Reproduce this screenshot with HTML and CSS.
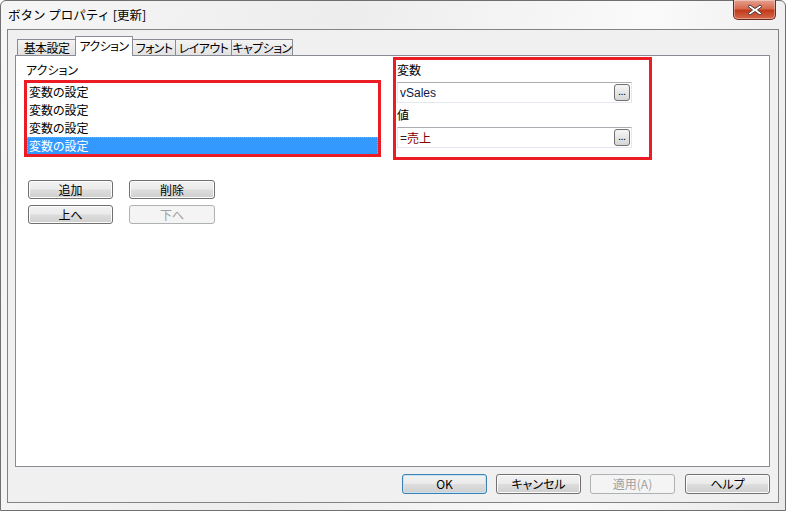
FILE: index.html
```html
<!DOCTYPE html>
<html lang="ja">
<head>
<meta charset="utf-8">
<link rel="stylesheet" href="styles.css">
</head>
<body>
<div class="window">
  <div class="titlebar">
    <span class="title">ボタン プロパティ [更新]</span>
    <div class="close">
      <svg width="20" height="12" viewBox="0 0 20 12">
        <path d="M5 1 L10 4.5 L15 1 L17 2.5 L12.5 6 L17 9.5 L15 11 L10 7.5 L5 11 L3 9.5 L7.5 6 L3 2.5 Z" fill="#fff" stroke="#4a3a3a" stroke-width="1"/>
      </svg>
    </div>
  </div>
  <div class="client">
    <div class="tabs">
      <div class="tab t1">基本設定</div>
      <div class="tab active">アクション</div>
      <div class="tab t3">フォント</div>
      <div class="tab t4">レイアウト</div>
      <div class="tab t5">キャプション</div>
    </div>
    <div class="panel">
      <div class="left">
        <div class="label">アクション</div>
        <div class="listbox">
          <div class="item">変数の設定</div>
          <div class="item">変数の設定</div>
          <div class="item">変数の設定</div>
          <div class="item selected">変数の設定</div>
        </div>
        <div class="btn-grid">
          <button class="btn">追加</button>
          <button class="btn">削除</button>
          <button class="btn">上へ</button>
          <button class="btn disabled">下へ</button>
        </div>
      </div>
      <div class="right">
        <div class="label">変数</div>
        <div class="field"><span class="val-var">vSales</span><span class="dots">...</span></div>
        <div class="label">値</div>
        <div class="field"><span class="val-eq">=</span><span class="val-expr">売上</span><span class="dots">...</span></div>
      </div>
    </div>
    <div class="footer">
      <button class="btn wide default">OK</button>
      <button class="btn wide">キャンセル</button>
      <button class="btn wide disabled">適用(A)</button>
      <button class="btn wide">ヘルプ</button>
    </div>
  </div>
</div>
</body>
</html>
```
FILE: styles.css
```css
* { box-sizing: border-box; }
html, body {
  margin: 0;
  padding: 0;
  background: #ffffff;
}
body {
  width: 786px;
  height: 511px;
  overflow: hidden;
  font-family: "Noto Sans CJK JP", "Liberation Sans", sans-serif;
  font-size: 12px;
  font-feature-settings: "palt";
  color: #000;
}
.window {
  width: 786px;
  height: 511px;
  border: 1px solid #6f6f6f;
  border-radius: 6px 6px 0 0;
  background: linear-gradient(100deg, #f6f6f6 0%, #ededed 40%, #fafafa 75%, #e9e9e9 100%);
  display: flex;
  flex-direction: column;
}
.titlebar {
  height: 27px;
  display: flex;
  align-items: flex-start;
  justify-content: space-between;
  padding-left: 7px;
  padding-right: 9px;
}
.title {
  font-size: 12.5px;
  line-height: 13px;
  margin-top: 7px;
  font-feature-settings: normal;
  color: #000;
}
.close {
  width: 43px;
  height: 20px;
  margin-top: -1px;
  border: 1px solid #6b2a20;
  border-top: none;
  border-radius: 0 0 5px 5px;
  background: linear-gradient(#e6a28e 0%, #d66a50 45%, #c13a1c 55%, #d56a4c 100%);
  display: flex;
  align-items: center;
  justify-content: center;
  box-shadow: inset 0 0 0 1px rgba(255,255,255,0.35);
}
.client {
  margin: 1px 6px 0 6px;
  height: 474px;
  border: 1px solid #838383;
  background: #f0f0f0;
  display: flex;
  flex-direction: column;
  padding: 0 8px 0 7px;
}
.tabs {
  display: flex;
  align-items: flex-end;
  height: 25px;
  margin-left: 2px;
}
.tab {
  height: 16px;
  line-height: 15px;
  border: 1px solid #898c95;
  border-bottom: none;
  background: linear-gradient(#f4f4f4, #e1e1e1);
  white-space: nowrap;
  text-align: center;
  letter-spacing: -0.6px;
}
.t1 { width: 59px; }
.t3 { width: 43px; border-left: none; }
.t4 { width: 56px; border-left: none; }
.t5 { width: 61px; border-left: none; }
.tab.active {
  width: 58px;
  height: 20px;
  line-height: 17px;
  background: #ffffff;
  position: relative;
  top: 1px;
  margin-left: -1px;
  z-index: 1;
}
.panel {
  height: 412px;
  border: 1px solid #898c95;
  background: #ffffff;
  display: flex;
  padding: 1px 0 0 8px;
}
.left {
  width: 357px;
  display: flex;
  flex-direction: column;
  padding-top: 6px;
}
.label {
  line-height: 13px;
  height: 13px;
  margin-left: 2px;
}
.listbox {
  margin-top: 4px;
  height: 77px;
  border: 3px solid #ec1c24;
  padding: 0;
  display: flex;
  flex-direction: column;
  overflow: hidden;
}
.item {
  flex: 0 0 18px;
  height: 18px;
  line-height: 18px;
  padding-left: 2px;
}
.item.selected {
  background: #3399ff;
  color: #fff;
  outline: 1px dotted #99aabb;
  outline-offset: -1px;
}
.btn-grid {
  display: grid;
  grid-template-columns: 85px 86px;
  column-gap: 16px;
  row-gap: 6px;
  margin-top: 23px;
  margin-left: 4px;
}
.btn {
  font-family: "Noto Sans CJK JP", "Liberation Sans", sans-serif;
  font-size: 12px;
  font-feature-settings: "palt";
  height: 19px;
  line-height: 15px;
  padding: 0;
  border: 1px solid #707070;
  border-radius: 3px;
  color: #000;
  background: linear-gradient(#f2f2f2 0%, #ebebeb 48%, #dddddd 52%, #cfcfcf 100%);
  box-shadow: inset 0 0 0 1px #fcfcfc;
}
.btn.disabled {
  color: #a0a0a0;
  border-color: #adb2b5;
  background: #f4f4f4;
  box-shadow: none;
}
.right {
  width: 259px;
  margin-left: 12px;
  height: 103px;
  border: 3px solid #ec1c24;
  padding: 3px 17px 0 1px;
  display: flex;
  flex-direction: column;
}
.right .label {
  margin-left: 0;
  height: 14px;
  line-height: 14px;
}
.field {
  margin-top: 5px;
  margin-bottom: 5px;
  height: 21px;
  flex: 0 0 21px;
  border: 1px solid #e3e9ef;
  border-top-color: #abadb3;
  display: flex;
  align-items: center;
  padding: 0 1px 0 2px;
  background: #fff;
}
.val-var {
  color: #0b1a4a;
  font-family: "Liberation Sans", sans-serif;
  font-size: 12px;
  flex: 1;
}
.val-eq {
  font-family: "Liberation Sans", sans-serif;
  color: #222;
}
.val-expr {
  color: #800000;
  flex: 1;
}
.dots {
  width: 16px;
  height: 17px;
  border: 1px solid #707070;
  border-radius: 3px;
  background: linear-gradient(#f6f6f6, #d6d6d6);
  font-size: 9px;
  line-height: 14px;
  text-align: center;
  color: #000;
}
.footer {
  display: flex;
  justify-content: flex-end;
  gap: 10px;
  margin-top: 7px;
}
.btn.wide {
  width: 85px;
  height: 20px;
  line-height: 16px;
}
.footer .btn:nth-child(2) { margin-left: -1px; }
.footer .btn:nth-child(3) { margin-left: -1px; }
.btn.default {
  border-color: #3c7fb1;
  box-shadow: inset 0 0 0 1px #c5e4f8;
}
```
